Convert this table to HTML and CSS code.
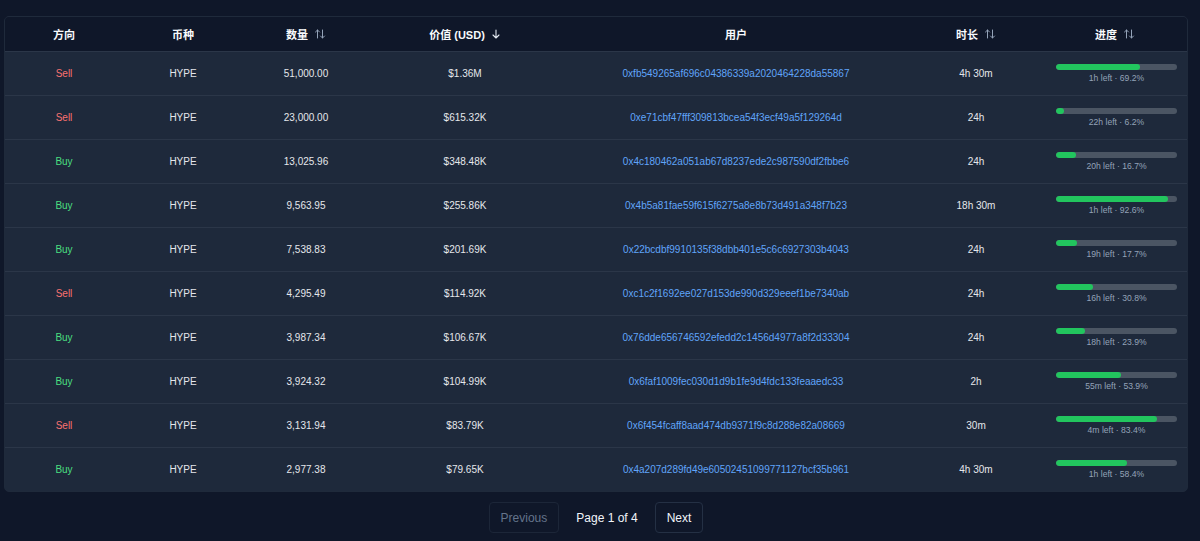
FILE: index.html
```html
<!DOCTYPE html>
<html lang="zh">
<head>
<meta charset="utf-8">
<link rel="stylesheet" href="styles.css">
</head>
<body>
<div class="page">
  <div class="table-wrap">
    <table class="trades">
      <colgroup>
        <col class="c1"><col class="c2"><col class="c3"><col class="c4"><col class="c5"><col class="c6"><col class="c7">
      </colgroup>
      <thead>
        <tr>
          <th>方向</th>
          <th>币种</th>
          <th><span class="th-in">数量<svg class="sort" viewBox="0 0 12 10" width="12" height="10"><path d="M3.5 9V1M1.5 3L3.5 1L5.5 3M8.5 1V9M6.5 7L8.5 9L10.5 7" fill="none" stroke="currentColor" stroke-width="1" stroke-linecap="round" stroke-linejoin="round"/></svg></span></th>
          <th><span class="th-in">价值 (USD)<svg class="sort active" viewBox="0 0 10 10" width="10" height="10"><path d="M5 1V9M2 6L5 9L8 6" fill="none" stroke="currentColor" stroke-width="1.1" stroke-linecap="round" stroke-linejoin="round"/></svg></span></th>
          <th>用户</th>
          <th><span class="th-in">时长<svg class="sort" viewBox="0 0 12 10" width="12" height="10"><path d="M3.5 9V1M1.5 3L3.5 1L5.5 3M8.5 1V9M6.5 7L8.5 9L10.5 7" fill="none" stroke="currentColor" stroke-width="1" stroke-linecap="round" stroke-linejoin="round"/></svg></span></th>
          <th><span class="th-in">进度<svg class="sort" viewBox="0 0 12 10" width="12" height="10"><path d="M3.5 9V1M1.5 3L3.5 1L5.5 3M8.5 1V9M6.5 7L8.5 9L10.5 7" fill="none" stroke="currentColor" stroke-width="1" stroke-linecap="round" stroke-linejoin="round"/></svg></span></th>
        </tr>
      </thead>
      <tbody>
        <tr><td class="sell">Sell</td><td>HYPE</td><td>51,000.00</td><td>$1.36M</td><td class="addr">0xfb549265af696c04386339a2020464228da55867</td><td>4h 30m</td><td><div class="prog"><div class="bar"><div class="fill" style="width:69.2%"></div></div><div class="lbl">1h left · 69.2%</div></div></td></tr>
        <tr><td class="sell">Sell</td><td>HYPE</td><td>23,000.00</td><td>$615.32K</td><td class="addr">0xe71cbf47fff309813bcea54f3ecf49a5f129264d</td><td>24h</td><td><div class="prog"><div class="bar"><div class="fill" style="width:6.2%"></div></div><div class="lbl">22h left · 6.2%</div></div></td></tr>
        <tr><td class="buy">Buy</td><td>HYPE</td><td>13,025.96</td><td>$348.48K</td><td class="addr">0x4c180462a051ab67d8237ede2c987590df2fbbe6</td><td>24h</td><td><div class="prog"><div class="bar"><div class="fill" style="width:16.7%"></div></div><div class="lbl">20h left · 16.7%</div></div></td></tr>
        <tr><td class="buy">Buy</td><td>HYPE</td><td>9,563.95</td><td>$255.86K</td><td class="addr">0x4b5a81fae59f615f6275a8e8b73d491a348f7b23</td><td>18h 30m</td><td><div class="prog"><div class="bar"><div class="fill" style="width:92.6%"></div></div><div class="lbl">1h left · 92.6%</div></div></td></tr>
        <tr><td class="buy">Buy</td><td>HYPE</td><td>7,538.83</td><td>$201.69K</td><td class="addr">0x22bcdbf9910135f38dbb401e5c6c6927303b4043</td><td>24h</td><td><div class="prog"><div class="bar"><div class="fill" style="width:17.7%"></div></div><div class="lbl">19h left · 17.7%</div></div></td></tr>
        <tr><td class="sell">Sell</td><td>HYPE</td><td>4,295.49</td><td>$114.92K</td><td class="addr">0xc1c2f1692ee027d153de990d329eeef1be7340ab</td><td>24h</td><td><div class="prog"><div class="bar"><div class="fill" style="width:30.8%"></div></div><div class="lbl">16h left · 30.8%</div></div></td></tr>
        <tr><td class="buy">Buy</td><td>HYPE</td><td>3,987.34</td><td>$106.67K</td><td class="addr">0x76dde656746592efedd2c1456d4977a8f2d33304</td><td>24h</td><td><div class="prog"><div class="bar"><div class="fill" style="width:23.9%"></div></div><div class="lbl">18h left · 23.9%</div></div></td></tr>
        <tr><td class="buy">Buy</td><td>HYPE</td><td>3,924.32</td><td>$104.99K</td><td class="addr">0x6faf1009fec030d1d9b1fe9d4fdc133feaaedc33</td><td>2h</td><td><div class="prog"><div class="bar"><div class="fill" style="width:53.9%"></div></div><div class="lbl">55m left · 53.9%</div></div></td></tr>
        <tr><td class="sell">Sell</td><td>HYPE</td><td>3,131.94</td><td>$83.79K</td><td class="addr">0x6f454fcaff8aad474db9371f9c8d288e82a08669</td><td>30m</td><td><div class="prog"><div class="bar"><div class="fill" style="width:83.4%"></div></div><div class="lbl">4m left · 83.4%</div></div></td></tr>
        <tr><td class="buy">Buy</td><td>HYPE</td><td>2,977.38</td><td>$79.65K</td><td class="addr">0x4a207d289fd49e60502451099771127bcf35b961</td><td>4h 30m</td><td><div class="prog"><div class="bar"><div class="fill" style="width:58.4%"></div></div><div class="lbl">1h left · 58.4%</div></div></td></tr>
      </tbody>
    </table>
  </div>
  <div class="pager">
    <button class="btn" disabled>Previous</button>
    <span class="page-info">Page 1 of 4</span>
    <button class="btn">Next</button>
  </div>
</div>
</body>
</html>
```
FILE: styles.css
```css
html, body {
  margin: 0;
  padding: 0;
  background: #0f1729;
  font-family: "Liberation Sans", Arial, "Noto Sans CJK SC", sans-serif;
  color: #e5e7eb;
}
.page {
  padding: 16px 12px 0 4px;
}
.table-wrap {
  border: 1px solid #1f2a3b;
  border-radius: 5px;
  overflow: hidden;
  background: #1e293b;
}
.trades {
  width: 100%;
  border-collapse: collapse;
  table-layout: fixed;
}
.c1 { width: 118px; }
.c2 { width: 120px; }
.c3 { width: 126px; }
.c4 { width: 192px; }
.c5 { width: 350px; }
.c6 { width: 130px; }
.c7 { width: 148px; }
thead tr {
  background: #0f1729;
  height: 34px;
}
th {
  font-size: 11px;
  font-weight: bold;
  color: #f8fafc;
  text-align: center;
  padding: 0;
}
.th-in {
  display: inline-flex;
  align-items: center;
  gap: 6px;
}
.sort { color: #94a3b8; }
.sort.active { color: #e2e8f0; }
tbody tr {
  height: 44px;
  border-top: 1px solid #2b3648;
}
td {
  font-size: 10px;
  text-align: center;
  padding: 0;
  color: #e5e7eb;
  white-space: nowrap;
}
td.sell { color: #f87171; }
td.buy { color: #4ade80; }
td.addr { color: #60a5fa; }
.prog {
  padding: 1px 12px 0 15px;
  display: flex;
  flex-direction: column;
  gap: 3px;
}
.bar {
  height: 6px;
  background: #4b5563;
  border-radius: 3px;
  overflow: hidden;
}
.fill {
  height: 100%;
  background: #22c55e;
  border-radius: 3px;
}
.lbl {
  font-size: 8.6px;
  color: #94a3b8;
  line-height: 10px;
}
.pager {
  display: flex;
  justify-content: center;
  align-items: center;
  gap: 17px;
  padding-top: 10px;
}
.btn {
  height: 31px;
  padding: 0 11px;
  background: #0f1729;
  border: 1px solid #243044;
  border-radius: 4px;
  font-family: "Liberation Sans", Arial, sans-serif;
  font-size: 12px;
  color: #f1f5f9;
}
.btn:disabled {
  color: #64748b;
  border-color: #1c2638;
}
.page-info {
  font-size: 12px;
  color: #f1f5f9;
}
```
